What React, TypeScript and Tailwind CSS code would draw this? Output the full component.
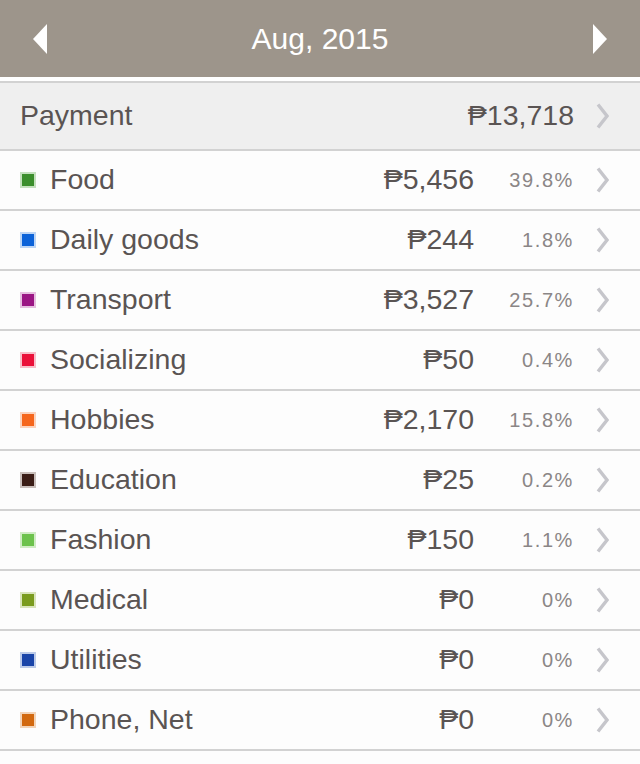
import React from 'react';

type Category = {
  name: string;
  color: string;
  ring: string;
  amount: string;
  pct: string;
};

const categories: Category[] = [
  { name: 'Food', color: 'bg-[#3b8e2c]', ring: 'border-[#c4e0bd]', amount: '₱5,456', pct: '39.8%' },
  { name: 'Daily goods', color: 'bg-[#0b62d8]', ring: 'border-[#bcd5f5]', amount: '₱244', pct: '1.8%' },
  { name: 'Transport', color: 'bg-[#9b1584]', ring: 'border-[#e6bfe0]', amount: '₱3,527', pct: '25.7%' },
  { name: 'Socializing', color: 'bg-[#ea1039]', ring: 'border-[#f8bfca]', amount: '₱50', pct: '0.4%' },
  { name: 'Hobbies', color: 'bg-[#f5661c]', ring: 'border-[#fcd3bd]', amount: '₱2,170', pct: '15.8%' },
  { name: 'Education', color: 'bg-[#3a1d16]', ring: 'border-[#c8bebb]', amount: '₱25', pct: '0.2%' },
  { name: 'Fashion', color: 'bg-[#6cc24c]', ring: 'border-[#d0ecc5]', amount: '₱150', pct: '1.1%' },
  { name: 'Medical', color: 'bg-[#7a9b1e]', ring: 'border-[#d9e4bb]', amount: '₱0', pct: '0%' },
  { name: 'Utilities', color: 'bg-[#1a44a8]', ring: 'border-[#bccae8]', amount: '₱0', pct: '0%' },
  { name: 'Phone, Net', color: 'bg-[#d2690f]', ring: 'border-[#f3d4b8]', amount: '₱0', pct: '0%' },
];

function Chevron() {
  return (
    <svg width="13" height="26" viewBox="0 0 13 26" className="shrink-0">
      <polyline points="2,1.5 11,13 2,24.5" fill="none" stroke="#c6c6cb" strokeWidth="3.4" />
    </svg>
  );
}

function CategoryRow({ c }: { c: Category }) {
  return (
    <div className="flex h-[60px] items-center border-b-2 border-[#d2d2d2] bg-[#fdfdfd] pl-[20px]">
      <span className={`h-[16px] w-[16px] shrink-0 border-2 ${c.ring} ${c.color}`} />
      <span className="ml-[14px] -mt-[2px] flex-1 text-[28.5px] text-[#5a5453]">{c.name}</span>
      <span className="-mt-[2px] text-[28.5px] text-[#5a5453]">{c.amount}</span>
      <span className="-mt-[1px] w-[100px] text-right text-[20px] tracking-[1.6px] text-[#8b8686]">{c.pct}</span>
      <span className="ml-[22px] mr-[31px] flex">
        <Chevron />
      </span>
    </div>
  );
}

export default function App() {
  return (
    <div
      className="h-[764px] w-[640px] overflow-hidden bg-[#fdfdfd]"
      style={{ fontFamily: '"Liberation Sans", "DejaVu Sans", Arial, sans-serif' }}
    >
      <div className="flex h-[77px] items-center justify-between bg-[#9d958b] px-[33px]">
        <svg width="14" height="30" viewBox="0 0 14 30">
          <polygon points="14,0 0,15 14,30" fill="#ffffff" />
        </svg>
        <span className="text-[30px] text-white">Aug, 2015</span>
        <svg width="14" height="30" viewBox="0 0 14 30">
          <polygon points="0,0 14,15 0,30" fill="#ffffff" />
        </svg>
      </div>
      <div className="h-[4px] bg-white" />
      <div className="flex h-[70px] items-center border-y-2 border-[#d2d2d2] bg-[#efefef] pl-[20px]">
        <span className="-mt-[2px] flex-1 text-[28.5px] text-[#5a5453]">Payment</span>
        <span className="-mt-[2px] text-[28.5px] text-[#5a5453]">₱13,718</span>
        <span className="ml-[22px] mr-[31px] flex">
          <Chevron />
        </span>
      </div>
      {categories.map((c) => (
        <CategoryRow key={c.name} c={c} />
      ))}
    </div>
  );
}
